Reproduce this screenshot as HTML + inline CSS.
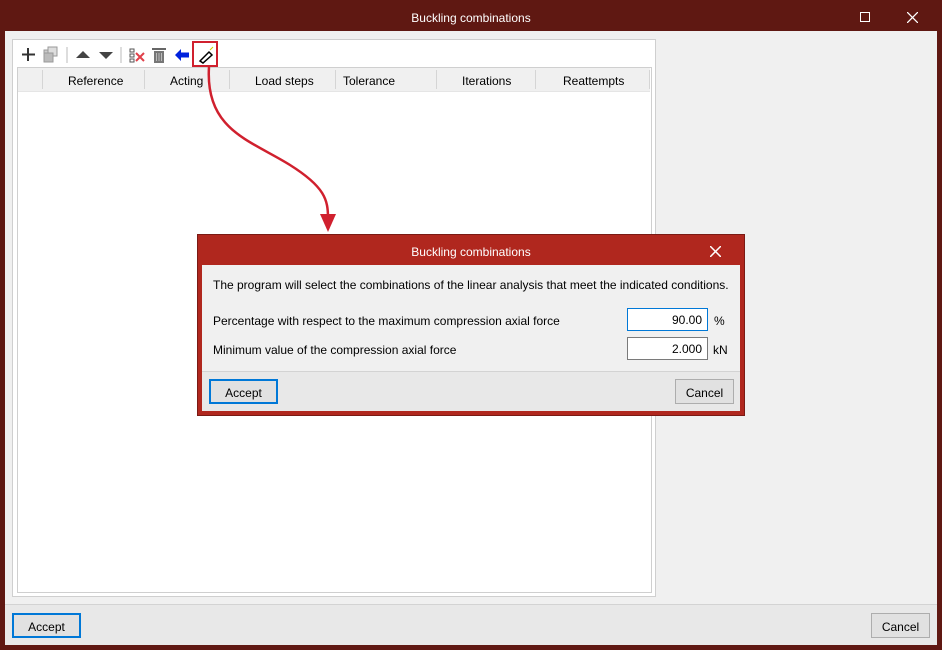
<!DOCTYPE html>
<html><head><style>
*{margin:0;padding:0;box-sizing:border-box}
body{width:942px;height:650px;position:relative;background:#5f1812;font-family:"Liberation Sans",sans-serif;font-size:12px;color:#000;overflow:hidden}
.a{position:absolute}
.t{white-space:nowrap}
.btn{position:absolute;background:#e1e1e1;border:1px solid #adadad;text-align:center;font-size:12px}
.btn.def{border:2px solid #0078d7}
.inp{position:absolute;background:#fff;border:1px solid #7a7a7a;text-align:right;padding-right:5px;font-size:12px}
.col{position:absolute;top:70px;height:19px;width:1px;background:#d5d5d5}
.h{position:absolute;top:74px;font-size:12px}
</style></head><body>
<div class="a t" style="left:0;width:942px;top:11px;text-align:center;color:#fff;font-size:12px">Buckling combinations</div>
<div class="a" style="left:860px;top:12px;width:10px;height:10px;border:1px solid #fff"></div>
<svg class="a" style="left:907px;top:12px" width="11" height="11"><path d="M0 0L11 11M11 0L0 11" stroke="#fff" stroke-width="1.3"/></svg>
<div class="a" style="left:5px;top:31px;width:932px;height:614px;background:#f0f0f0"></div>
<div class="a" style="left:5px;top:604px;width:932px;height:41px;background:#e8e8e8;border-top:1px solid #d3d3d3"></div>
<div class="a" style="left:12px;top:39px;width:644px;height:558px;background:#fff;border:1px solid #cfcfcf"></div>
<div class="a" style="left:17px;top:67px;width:635px;height:526px;background:#fff;border:1px solid #cfcfcf"></div>
<div class="a" style="left:18px;top:68px;width:632px;height:24px;background:#f0f0f0;border-bottom:1px solid #e5e5e5"></div>
<div class="col" style="left:42px"></div><div class="col" style="left:144px"></div><div class="col" style="left:229px"></div><div class="col" style="left:335px"></div><div class="col" style="left:436px"></div><div class="col" style="left:535px"></div><div class="col" style="left:649px"></div>
<div class="h" style="left:68px">Reference</div>
<div class="h" style="left:170px">Acting</div>
<div class="h" style="left:255px">Load steps</div>
<div class="h" style="left:343px">Tolerance</div>
<div class="h" style="left:462px">Iterations</div>
<div class="h" style="left:563px">Reattempts</div>
<svg class="a" style="left:20px;top:45px" width="200" height="20">
<path d="M8 3V16M2 9.5H15" stroke="#333" stroke-width="2"/>
<rect x="24" y="5" width="9" height="9" fill="#ccc" stroke="#999"/><rect x="28" y="2" width="9" height="9" fill="#ddd" stroke="#999"/><rect x="24" y="8" width="9" height="9" fill="#bbb" stroke="#999"/>
<path d="M47 2V18" stroke="#bbb"/>
<path d="M56 13L63 6L70 13Z" fill="#444"/><path d="M79 7L86 14L93 7Z" fill="#444"/>
<path d="M101 2V18" stroke="#bbb"/>
<rect x="110" y="4" width="4" height="3" fill="none" stroke="#555"/><rect x="110" y="9" width="4" height="3" fill="none" stroke="#555"/><rect x="110" y="14" width="4" height="3" fill="none" stroke="#555"/>
<path d="M116 8L124 16M124 8L116 16" stroke="#e0404a" stroke-width="2"/>
<rect x="134" y="6" width="10" height="12" fill="#777"/><rect x="132" y="3" width="14" height="2" fill="#666"/><path d="M136.5 8V16M139 8V16M141.5 8V16" stroke="#bbb"/>
<path d="M155 10L161 4V7.5H169V12.5H161V16Z" fill="#0022dd"/>
<path d="M180 16L189 7L192 10L183 18Z" fill="#fff" stroke="#000" stroke-width="1.5"/><path d="M190 5L193 2" stroke="#cc0"/>
</svg>
<div class="a" style="left:192px;top:41px;width:26px;height:26px;border:2px solid #d0202e"></div>
<svg class="a" style="left:0;top:0" width="400" height="240"><path d="M209 67C205 130 250 140 290 165C325 187 328 200 328 218" fill="none" stroke="#d0202e" stroke-width="2.5"/><path d="M320 214L336 214L328 232Z" fill="#d0202e"/></svg>
<div class="a" style="left:197px;top:234px;width:548px;height:182px;background:#b0271e;border:1px solid #7a1a14"></div>
<div class="a t" style="left:197px;width:548px;top:245px;text-align:center;color:#fff">Buckling combinations</div>
<svg class="a" style="left:710px;top:246px" width="11" height="11"><path d="M0 0L11 11M11 0L0 11" stroke="#fff" stroke-width="1.5"/></svg>
<div class="a" style="left:202px;top:265px;width:538px;height:146px;background:#f0f0f0"></div>
<div class="a" style="left:202px;top:371px;width:538px;height:40px;background:#e8e8e8;border-top:1px solid #d3d3d3"></div>
<div class="a t" style="left:213px;top:278px">The program will select the combinations of the linear analysis that meet the indicated conditions.</div>
<div class="a t" style="left:213px;top:314px">Percentage with respect to the maximum compression axial force</div>
<div class="a t" style="left:213px;top:343px">Minimum value of the compression axial force</div>
<div class="inp" style="left:627px;top:308px;width:81px;height:23px;line-height:23px;border-color:#0078d7">90.00</div>
<div class="inp" style="left:627px;top:337px;width:81px;height:23px;line-height:23px">2.000</div>
<div class="a t" style="left:714px;top:314px">%</div>
<div class="a t" style="left:713px;top:343px">kN</div>
<div class="btn def" style="left:209px;top:379px;width:69px;height:25px;line-height:24px">Accept</div>
<div class="btn" style="left:675px;top:379px;width:59px;height:25px;line-height:26px">Cancel</div>
<div class="btn def" style="left:12px;top:613px;width:69px;height:25px;line-height:24px">Accept</div>
<div class="btn" style="left:871px;top:613px;width:59px;height:25px;line-height:26px">Cancel</div>
</body></html>
